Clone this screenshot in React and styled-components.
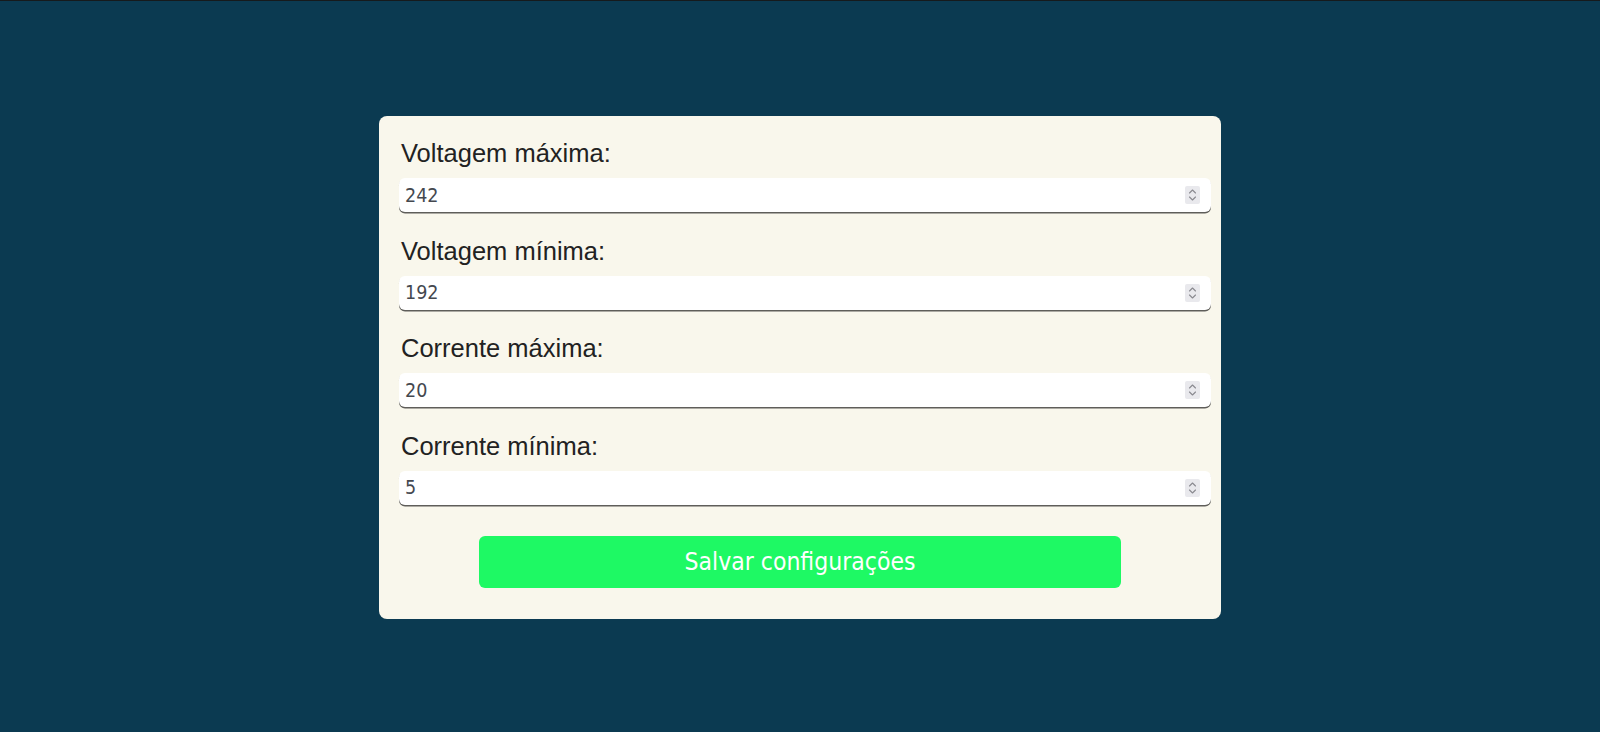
import React from "react";
import styled, { createGlobalStyle } from "styled-components";

const GlobalStyle = createGlobalStyle`
  html, body {
    margin: 0;
    padding: 0;
    background: #0b3a51;
  }
  * { box-sizing: border-box; }
`;

const Page = styled.main`
  min-height: 100vh;
  border-top: 1px solid #161a1c;
  padding-top: 2px;
  display: flex;
  align-items: center;
  justify-content: center;
`;

const Card = styled.form`
  width: 842px;
  padding: 24px 20px 31px;
  background: #f9f7ec;
  border-radius: 8px;
  display: flex;
  flex-direction: column;
`;

const Field = styled.div`
  display: flex;
  flex-direction: column;
  & + & {
    margin-top: 25.5px;
  }
`;

const Label = styled.label`
  font-family: "Liberation Sans", Arial, sans-serif;
  font-size: 25.5px;
  line-height: 27px;
  color: #222222;
  margin: 0 0 11px 2px;
`;

const InputWrap = styled.div`
  position: relative;
  width: calc(100% + 10px);
`;

const NumberInput = styled.input`
  display: block;
  width: 100%;
  height: 34px;
  border: none;
  outline: none;
  border-radius: 6px;
  background: #ffffff;
  box-shadow: 0 1.5px 0.5px rgba(0, 0, 0, 0.62);
  padding: 0 6px;
  font-family: "DejaVu Sans Condensed", "DejaVu Sans", sans-serif;
  font-size: 19.5px;
  color: #44484f;
  -moz-appearance: textfield;
  appearance: textfield;
  &::-webkit-inner-spin-button,
  &::-webkit-outer-spin-button {
    -webkit-appearance: none;
    margin: 0;
  }
`;

const Spinner = styled.span`
  position: absolute;
  right: 11px;
  top: 50%;
  transform: translateY(-50%);
  width: 15px;
  height: 18px;
  background: #e9e9ed;
  border-radius: 2px;
  display: flex;
  align-items: center;
  justify-content: center;
  pointer-events: none;
`;

const SaveButton = styled.button`
  align-self: center;
  margin-top: 31px;
  width: 80%;
  height: 52px;
  border: none;
  border-radius: 6px;
  background: #1ef964;
  color: #ffffff;
  font-family: "DejaVu Sans Condensed", "DejaVu Sans", sans-serif;
  font-size: 24.5px;
  cursor: pointer;
`;

const SpinIcon = () => (
  <svg width="9" height="14" viewBox="0 0 9 14" fill="none">
    <path d="M1.5 5 L4.5 2 L7.5 5" stroke="#8a8a90" strokeWidth="1.1" strokeLinecap="round" strokeLinejoin="round" />
    <path d="M1.5 9 L4.5 12 L7.5 9" stroke="#8a8a90" strokeWidth="1.1" strokeLinecap="round" strokeLinejoin="round" />
  </svg>
);

const fields = [
  { id: "vmax", label: "Voltagem máxima:", value: 242 },
  { id: "vmin", label: "Voltagem mínima:", value: 192 },
  { id: "imax", label: "Corrente máxima:", value: 20 },
  { id: "imin", label: "Corrente mínima:", value: 5 },
];

export default function App() {
  return (
    <>
      <GlobalStyle />
      <Page>
        <Card onSubmit={(e) => e.preventDefault()}>
          {fields.map((f) => (
            <Field key={f.id}>
              <Label htmlFor={f.id}>{f.label}</Label>
              <InputWrap>
                <NumberInput id={f.id} type="number" defaultValue={f.value} />
                <Spinner>
                  <SpinIcon />
                </Spinner>
              </InputWrap>
            </Field>
          ))}
          <SaveButton type="submit">Salvar configurações</SaveButton>
        </Card>
      </Page>
    </>
  );
}
